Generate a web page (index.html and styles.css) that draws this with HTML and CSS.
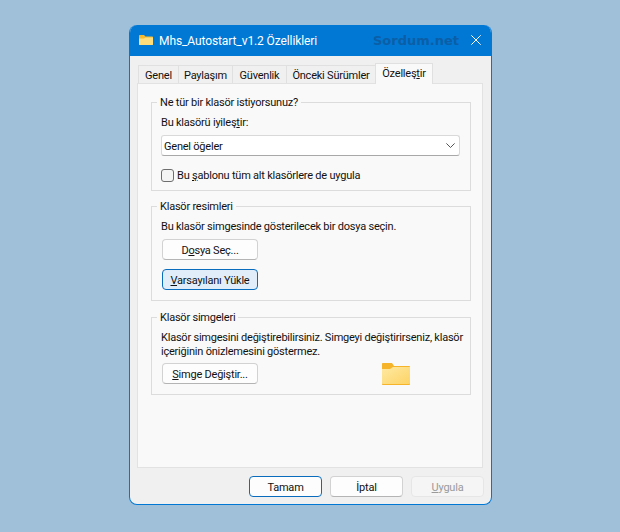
FILE: index.html
```html
<!DOCTYPE html>
<html lang="tr">
<head>
<meta charset="utf-8">
<title>Mhs_Autostart_v1.2 Özellikleri</title>
<link rel="stylesheet" href="styles.css">
</head>
<body>
<div class="window">
  <div class="titlebar">
    <svg class="title-icon" viewBox="0 0 14 10" width="14" height="10"><path d="M0 1C0 .4.4 0 1 0H5L6.500 1.500H13C13.600 1.500 14 1.900 14 2.500V9C14 9.600 13.600 10 13 10H1C.4 10 0 9.600 0 9Z" fill="#f6b92d"/><path d="M0 3.500H5L6.500 2.500H14V9C14 9.600 13.600 10 13 10H1C.4 10 0 9.600 0 9Z" fill="#fedd7a"/></svg>
    <span class="title">Mhs_Autostart_v1.2 Özellikleri</span>
    <span class="watermark">Sordum.net</span>
    <svg class="close" viewBox="0 0 10 10" width="10" height="10"><path d="M.3.3L9.700 9.700M9.700.3L.3 9.700" stroke="#fff" stroke-width="1" fill="none"/></svg>
  </div>
  <div class="content">
    <div class="tabs">
      <div class="tab t1">Genel</div>
      <div class="tab t2">Paylaşım</div>
      <div class="tab t3">Güvenlik</div>
      <div class="tab t4">Önceki Sürümler</div>
      <div class="tab active t5">Özelleş<u>t</u>ir</div>
    </div>
    <div class="panel">
      <fieldset class="group g1">
        <legend>Ne tür bir klasör istiyorsunuz?</legend>
        <div class="label">Bu klasörü iyileş<u>t</u>ir:</div>
        <div class="combo">
          <span>Genel öğeler</span>
          <svg viewBox="0 0 9 5" width="9" height="5"><path d="M.4.4L4.500 4.500L8.600.4" stroke="#555" stroke-width="1" fill="none"/></svg>
        </div>
        <div class="check-row">
          <span class="checkbox"></span>
          <span>Bu <u>ş</u>ablonu tüm alt klasörlere de uy<u>g</u>ula</span>
        </div>
      </fieldset>
      <fieldset class="group g2">
        <legend>Klasör resimleri</legend>
        <div class="label">Bu klasör simgesinde gösterilecek bir dosya seçin.</div>
        <button class="btn first">D<u>o</u>sya Seç...</button>
        <button class="btn focus"><u>V</u>arsayılanı Yükle</button>
      </fieldset>
      <fieldset class="group g3">
        <legend>Klasör simgeleri</legend>
        <div class="label">Klasör simgesini değiştirebilirsiniz. Simgeyi değiştirirseniz, klasör<br>içeriğinin önizlemesini göstermez.</div>
        <div class="icon-row">
          <button class="btn"><u>S</u>imge Değiştir...</button>
          <svg class="folder" viewBox="0 0 28 22" width="28" height="22">
            <defs><linearGradient id="fg" x1="0" y1="0" x2="1" y2="1"><stop offset="0" stop-color="#fee9a2"/><stop offset="1" stop-color="#fdd365"/></linearGradient></defs>
            <path d="M0 1C0 .4.4 0 1 0H10L12 3H27C27.600 3 28 3.400 28 4V21C28 21.600 27.600 22 27 22H1C.4 22 0 21.600 0 21Z" fill="#f6b42a"/>
            <path d="M0 6H8L11 4H28V20.500C28 20.800 27.800 21 27.500 21H.5C.2 21 0 20.800 0 20.500Z" fill="url(#fg)"/>
          </svg>
        </div>
      </fieldset>
    </div>
    <div class="actions">
      <button class="btn act default">Tamam</button>
      <button class="btn act">İptal</button>
      <button class="btn act disabled"><u>U</u>ygula</button>
    </div>
  </div>
</div>
</body>
</html>
```
FILE: styles.css
```css
* { box-sizing: border-box; }
html, body { margin: 0; height: 100%; }
body {
  background: #a0bfd9;
  font-family: Roboto, "Noto Sans", sans-serif;
  font-size: 11px;
  letter-spacing: -0.22px;
  color: #111;
  padding: 25px 0 0 129px;
}
u { text-underline-offset: 1px; text-decoration-thickness: 1px; }
.window {
  width: 363px;
  height: 480px;
  border-radius: 8px;
  border: 1px solid #0078d4;
  border-top: 0;
  background: #f0f0f0;
  overflow: hidden;
  display: flex;
  flex-direction: column;
}
.titlebar {
  height: 31px;
  flex: none;
  background: #0078d4;
  color: #fff;
  display: flex;
  align-items: center;
  padding: 0 10px 0 9px;
}
.title-icon { flex: none; margin-right: 6px; margin-top: -1px; }
.title { font-size: 12px; letter-spacing: -0.1px; margin-top: 1px; white-space: nowrap; }
.watermark {
  margin-left: auto;
  margin-right: 12px;
  margin-top: -1px;
  font: bold 13px "DejaVu Sans", sans-serif;
  letter-spacing: 0;
  color: #0c5ea6;
}
.close { flex: none; margin-top: -1px; }
.content { flex: 1; display: flex; flex-direction: column; padding: 0 7px; }
.tabs { display: flex; height: 27px; align-items: flex-end; padding-left: 1px; flex: none; }
.tab {
  height: 18px;
  border: 1px solid #e0e0e0;
  border-bottom: 0;
  margin-left: -1px;
  background: #f0f0f0;
  text-align: center;
  line-height: 20px;
  white-space: nowrap;
}
.t1 { width: 41px; margin-left: 0; }
.t2 { width: 55px; }
.t3 { width: 55px; }
.t4 { width: 90px; }
.t5 { width: 58px; }
.tab.active { height: 21px; background: #f9f9f9; line-height: 19px; position: relative; top: 1px; }
.panel {
  height: 385px;
  width: 346px;
  flex: none;
  background: #f9f9f9;
  border: 1px solid #e2e2e2;
  padding: 11px 0 0 13px;
  display: flex;
  flex-direction: column;
  gap: 8px;
}
.group {
  margin: 0;
  width: 320px;
  border: 1px solid #dcdcdc;
  padding: 0 10px 0 9px;
  min-width: 0;
}
.group legend { padding: 0 3px; margin-left: -4px; line-height: 16px; height: 14px; }
.g1 { height: 96px; }
.g2 { height: 102px; margin-bottom: 1px; }
.g3 { height: 85px; }
.label { line-height: 14px; margin-top: 7px; margin-bottom: -1px; white-space: nowrap; }
.combo {
  height: 21px;
  margin-top: 6px;
  background: #fff;
  border: 1px solid #d9d9d9;
  border-bottom-color: #a8a8a8;
  border-radius: 3px;
  display: flex;
  align-items: center;
  justify-content: space-between;
  padding: 0 4px 0 2px;
}
.combo span { margin-top: 2px; }
.check-row { display: flex; align-items: center; gap: 3px; margin-top: 12px; height: 14px; white-space: nowrap; }
.checkbox {
  width: 13px; height: 13px;
  background: #f4f4f4;
  border: 1px solid #6e6e6e;
  border-radius: 3px;
  flex: none;
}
.btn {
  display: block;
  width: 96px;
  height: 21px;
  padding: 2px 0 0;
  margin-left: 1px;
  font: inherit;
  letter-spacing: inherit;
  color: inherit;
  background: #fdfdfd;
  border: 1px solid #d2d2d2;
  border-bottom-color: #b4b4b4;
  border-radius: 4px;
  white-space: nowrap;
}
.first { margin-top: 6px; }
.focus { margin-top: 9px; background: #e1eefa; border: 1px solid #0a6cbd; }
.icon-row { display: flex; justify-content: space-between; align-items: flex-start; margin-top: 5px; padding-right: 50px; }
.folder { flex: none; }
.actions { display: flex; justify-content: flex-end; gap: 8px; margin-top: 8px; }
.act { width: 73px; margin-left: 0; }
.default { border: 1px solid #0a6cbd; }
.disabled { background: #f5f5f5; color: #9a9a9a; border-color: #e6e6e6; }
```
